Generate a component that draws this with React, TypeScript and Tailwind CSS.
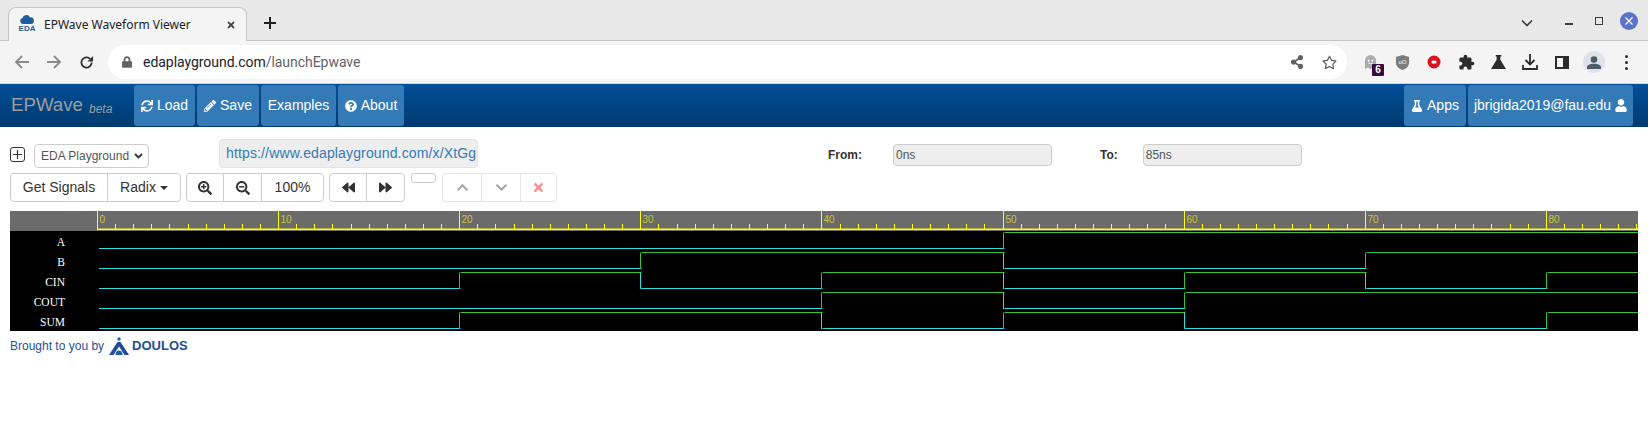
import React from "react";
import { FaSync, FaPencilAlt, FaQuestionCircle, FaFlask, FaUser, FaSearchPlus, FaSearchMinus, FaBackward, FaForward, FaChevronUp, FaChevronDown, FaTimes, FaRegStar, FaLock, FaShareAlt } from "react-icons/fa";

const X0 = 97;
const PX = 18.11;
const W = 1628;
const ORIGIN = 10;

type Sig = { name: string; edges: number[] };
const signals: Sig[] = [
  { name: "A", edges: [50] },
  { name: "B", edges: [30, 50, 70] },
  { name: "CIN", edges: [20, 30, 40, 50, 60, 70, 80] },
  { name: "COUT", edges: [40, 50, 60] },
  { name: "SUM", edges: [20, 40, 50, 60, 80] },
];
const xOf = (t: number) => Math.round(X0 + t * PX) + 0.5 - ORIGIN;

function Wave() {
  const ticks: number[] = [];
  for (let t = 0; t <= 85; t++) ticks.push(t);
  return (
    <svg width={W} height={120} className="block" style={{ fontFamily: '"Liberation Sans", sans-serif' }}>
      <rect x={0} y={0} width={W} height={20} fill="#6b6b6b" />
      <rect x={0} y={20} width={W} height={100} fill="#000" />
      <rect x={87} y={17.5} width={W - 87} height={1.5} fill="#ffff00" />
      {ticks.map((t) => {
        const major = t % 10 === 0;
        return <line key={t} x1={xOf(t)} x2={xOf(t)} y1={major ? 0 : 13} y2={18} stroke="#ffff00" strokeWidth={1} />;
      })}
      {ticks.filter((t) => t % 10 === 0).map((t) => (
        <text key={t} x={xOf(t) + 2} y={12} fontSize={10} fill="#c8c832">{t}</text>
      ))}
      {signals.map((s, i) => {
        const low = 37.5 + i * 20;
        const high = 21.5 + i * 20;
        const pts = [0, ...s.edges, 85.2];
        const segs: React.ReactNode[] = [];
        let state = false;
        for (let k = 0; k < pts.length - 1; k++) {
          const a = k === 0 ? 88 : xOf(pts[k]);
          const b = k === pts.length - 2 ? W : xOf(pts[k + 1]);
          const y = state ? high : low;
          const color = state ? "#36c336" : "#30e0e0";
          segs.push(<line key={`h${k}`} x1={a + 1} x2={b + (k === pts.length - 2 ? 0 : 1)} y1={y} y2={y} stroke={color} />);
          if (k > 0) {
            segs.push(<line key={`v${k}`} x1={a} x2={a} y1={high} y2={low + 0.5} stroke={color} />);
          }
          state = !state;
        }
        return (
          <g key={s.name}>
            <text x={55} y={35 + i * 20} textAnchor="end" fontSize={11.5} fill="#fff" style={{ fontFamily: '"Liberation Serif", serif' }}>{s.name}</text>
            {segs}
          </g>
        );
      })}
    </svg>
  );
}

const navBtn = "h-[41px] rounded-[3px] bg-[#337ab7] text-white text-[14px] flex items-center justify-center gap-[4px]";

function Favicon() {
  return (
    <div className="w-4 h-[20px] flex flex-col items-center justify-start">
      <svg width="14" height="9" viewBox="0 0 14 9" className="block"><path d="M3 9a3 3 0 0 1-.5-5.900A4 4 0 0 1 10 2.400 3.300 3.300 0 0 1 11 9z" fill="#1f5c99" /></svg>
      <span className="text-[8px] leading-[9px] font-bold text-[#1f5c99]">EDA</span>
    </div>
  );
}

const cell = "w-8 h-8 flex items-center justify-center shrink-0";

function Toolbar() {
  return (
    <div className="h-[43px] bg-[#f4f4f4] border-b border-[#d5d5d5] flex items-center text-[#5f6368]">
      <div className="w-[108px] pl-[6px] flex items-center shrink-0">
        <div className={cell}>
          <svg width="15" height="14" viewBox="0 0 15 14" className="text-[#8a8a8a] -ml-[2px]"><path d="M15 7H2M8 1 2 7l6 6" fill="none" stroke="currentColor" strokeWidth="1.800" /></svg>
        </div>
        <div className={cell}>
          <svg width="15" height="14" viewBox="0 0 15 14" className="text-[#8a8a8a]"><path d="M0 7h13M7 1l6 6-6 6" fill="none" stroke="currentColor" strokeWidth="1.800" /></svg>
        </div>
        <div className={cell}>
          <svg width="15" height="15" viewBox="0 0 16 16" className="text-[#333]"><path d="M13.500 8a5.500 5.500 0 1 1-1.600-3.900" fill="none" stroke="currentColor" strokeWidth="2" /><path d="M15 1v6H9z" fill="currentColor" /></svg>
        </div>
      </div>
      <div className="w-[1239px] h-[34px] bg-white rounded-full flex items-center pl-[14px] pr-[10px] text-[14px]" style={{ fontFamily: '"Roboto", sans-serif' }}>
        <FaLock className="text-[#5f6368] w-[10px] h-[12px] mr-[11px]" />
        <span className="text-[#202124] tracking-[-0.04px]">edaplayground.com</span>
        <span className="text-[#5f6368] tracking-[-0.04px]">/launchEpwave</span>
        <div className="ml-auto flex items-center gap-[18px]">
          <FaShareAlt className="w-[14px] h-[14px] text-[#5f6368]" />
          <FaRegStar className="w-[15px] h-[15px] text-[#5f6368]" />
        </div>
      </div>
      <div className="flex items-center pl-[7px]">
        <div className={`${cell} relative`}>
          <svg width="13" height="15" viewBox="0 0 14 16" className="text-[#a9adb1]"><path d="M1 15V6a6 6 0 0 1 12 0v9l-3-1.500-3 1.500-3-1.500z" fill="currentColor" /><circle cx="5" cy="6" r="1" fill="#fff" /><circle cx="9" cy="6" r="1" fill="#fff" /><path d="M4.500 8.500q2.500 2 5 0" stroke="#fff" strokeWidth="0.900" fill="none" /></svg>
          <span className="absolute left-[18px] top-[18px] w-[12px] h-[12px] rounded-[1px] bg-[#3a0b3d] text-white text-[10px] font-bold leading-[12px] text-center" style={{ fontFamily: '"Liberation Sans", sans-serif' }}>6</span>
        </div>
        <div className={cell}>
          <svg width="15" height="15" viewBox="0 0 14 16"><path d="M7 0 14 2v6c0 4-3 6.500-7 8-4-1.500-7-4-7-8V2z" fill="#7b7b7b" /><text x="7" y="10" fontSize="6.500" textAnchor="middle" fill="#fff" style={{ fontFamily: '"Liberation Sans", sans-serif' }}>uO</text></svg>
        </div>
        <div className={cell}>
          <svg width="14" height="14" viewBox="0 0 14 14"><circle cx="7" cy="7" r="6.500" fill="#d9131f" /><rect x="4.700" y="5.700" width="4.600" height="2.800" fill="#fff" /></svg>
        </div>
        <div className={cell}>
          <svg width="17" height="17" viewBox="0 0 24 24"><path d="M20.500 11H19V7c0-1.100-.9-2-2-2h-4V3.500C13 2.120 11.880 1 10.500 1S8 2.120 8 3.500V5H4c-1.100 0-1.990.9-1.990 2v3.800H3.500c1.490 0 2.700 1.210 2.700 2.700s-1.210 2.700-2.700 2.700H2V20c0 1.100.9 2 2 2h3.800v-1.500c0-1.490 1.210-2.700 2.700-2.700 1.490 0 2.700 1.210 2.700 2.700V22H17c1.100 0 2-.9 2-2v-4h1.500c1.380 0 2.500-1.120 2.500-2.500S21.880 11 20.500 11z" fill="#2c2c2c" /></svg>
        </div>
        <div className={cell}>
          <svg width="15" height="14" viewBox="0 0 16 15"><path d="M5 0h6v1.500h-1V5l6 10H0L6 5V1.500H5z" fill="#2c2c2c" /></svg>
        </div>
        <div className={cell}>
          <svg width="16" height="16" viewBox="0 0 16 16"><path d="M8 0v10M3.500 6 8 10.500 12.500 6M1 11v4h14v-4" fill="none" stroke="#2c2c2c" strokeWidth="1.800" /></svg>
        </div>
        <div className={cell}>
          <svg width="14" height="13" viewBox="0 0 14 13"><rect x="1" y="1" width="12" height="11" fill="none" stroke="#2c2c2c" strokeWidth="2" /><rect x="8" y="1" width="5" height="11" fill="#2c2c2c" /></svg>
        </div>
        <div className={cell}>
          <div className="w-[22px] h-[22px] rounded-full bg-[#dfe2e7] flex items-center justify-center">
            <svg width="14" height="13" viewBox="0 0 14 13"><circle cx="7" cy="3.500" r="3.300" fill="#4e5a6b" /><path d="M0 13v-1.500C0 9 3 7.800 7 7.800s7 1.200 7 3.700V13z" fill="#4e5a6b" /></svg>
          </div>
        </div>
        <div className={cell}>
          <div className="flex flex-col gap-[3px]">
            <span className="w-[3px] h-[3px] rounded-full bg-[#2c2c2c]" />
            <span className="w-[3px] h-[3px] rounded-full bg-[#2c2c2c]" />
            <span className="w-[3px] h-[3px] rounded-full bg-[#2c2c2c]" />
          </div>
        </div>
      </div>
    </div>
  );
}

const grpBtn = "h-full flex items-center justify-center border-r border-[#cccccc] last:border-r-0 text-[14px] text-[#333]";
const grp = "h-[29px] flex border border-[#cccccc] rounded-[4px] bg-white";

export default function App() {
  return (
    <div className="w-[1648px] h-[427px] bg-white overflow-hidden" style={{ fontFamily: '"Liberation Sans", sans-serif' }}>
      {/* tab strip */}
      <div className="h-[41px] bg-[#e8e8e8] border-b border-[#c4c4c4] flex items-end pl-[8px]">
        <div className="w-[239px] h-[34px] -mb-[1px] bg-[#f4f4f4] rounded-t-[8px] border border-b-0 border-[#c4c4c4] flex items-center pl-[10px] pr-[10px]">
          <Favicon />
          <span className="ml-[9px] text-[12px] text-[#202124]" style={{ fontFamily: '"Noto Sans", sans-serif' }}>EPWave Waveform Viewer</span>
          <FaTimes className="ml-auto w-[10px] h-[10px] text-[#3c4043]" />
        </div>
        <div className="h-[34px] flex items-center ml-[16px]">
          <svg width="14" height="14" viewBox="0 0 14 14"><path d="M7 1v12M1 7h12" stroke="#1f1f1f" strokeWidth="2" /></svg>
        </div>
        <div className="flex-1 h-[40px] pt-[2px] flex items-center justify-end pr-[10px]">
          <svg width="12" height="8" viewBox="0 0 12 8" className="mt-[3px]"><path d="M1 1.500 6 6.500 11 1.500" fill="none" stroke="#3c3c3c" strokeWidth="1.600" /></svg>
          <div className="ml-[32px] mt-[5px] w-[8px] h-[2px] bg-[#3c3c3c]" />
          <div className="ml-[22px] w-[8px] h-[8px] border border-[#3c3c3c]" />
          <div className="ml-[17px] w-[18px] h-[18px] rounded-full bg-[#5b74c9] flex items-center justify-center">
            <svg width="8" height="8" viewBox="0 0 8 8"><path d="M.5.5l7 7M7.500.5l-7 7" stroke="#fff" strokeWidth="1.200" /></svg>
          </div>
        </div>
      </div>
      <Toolbar />
      {/* navbar */}
      <div className="h-[43px] bg-gradient-to-b from-[#004f98] to-[#003a70] flex items-start pt-[1px] pl-[11px]">
        <div className="w-[123px] h-[41px] flex items-center text-[#9d9d9d]">
          <span className="text-[18.7px]">EPWave</span>
          <span className="text-[12px] italic ml-[6px] mt-[7px]">beta</span>
        </div>
        <div className="flex gap-[2px]">
          <div className={`${navBtn} w-[61px]`}><FaSync className="w-[12px] h-[12px]" />Load</div>
          <div className={`${navBtn} w-[62px]`}><FaPencilAlt className="w-[12px] h-[12px]" />Save</div>
          <div className={`${navBtn} w-[75px]`}>Examples</div>
          <div className={`${navBtn} w-[66px]`}><FaQuestionCircle className="w-[12px] h-[12px]" />About</div>
        </div>
        <div className="ml-auto flex gap-[2px] pr-[15px]">
          <div className={`${navBtn} w-[62px]`}><FaFlask className="w-[12px] h-[12px]" />Apps</div>
          <div className={`${navBtn} w-[165px]`}>jbrigida2019@fau.edu<FaUser className="w-[12px] h-[13px]" /></div>
        </div>
      </div>
      {/* controls */}
      <div className="pl-[10px] pt-[12px]">
        <div className="flex h-[34px] items-start">
          <div className="mt-[8px] w-[15px] h-[15px] border-[1.500px] border-[#333] rounded-[3px] flex items-center justify-center">
            <svg width="9" height="9" viewBox="0 0 9 9"><path d="M4.500 0v9M0 4.500h9" stroke="#333" strokeWidth="1.200" /></svg>
          </div>
          <div className="ml-[9px] mt-[5px] w-[115px] h-[24px] border border-[#cccccc] rounded-[4px] flex items-center pl-[6px] text-[12px] text-[#555]">
            EDA Playground
            <svg width="9" height="6" viewBox="0 0 9 6" className="ml-[5px]"><path d="M1 1l3.500 3.500L8 1" fill="none" stroke="#333" strokeWidth="1.800" /></svg>
          </div>
          <div className="ml-[70px] w-[259px] h-[29px] bg-[#eeeeee] border border-[#e3e3e3] rounded-[4px] flex items-center pl-[6px] text-[14px] tracking-[0.14px] text-[#337ab7]">https://www.edaplayground.com/x/XtGg</div>
          <span className="ml-[350px] mt-[7px] text-[12px] font-bold text-[#333]">From:</span>
          <div className="ml-[31px] mt-[5px] w-[159px] h-[22px] bg-[#eeeeee] border border-[#cccccc] rounded-[4px] flex items-center pl-[2px] text-[12px] text-[#555]">0ns</div>
          <span className="ml-[48px] mt-[7px] text-[12px] font-bold text-[#333]">To:</span>
          <div className="ml-[25px] mt-[5px] w-[159px] h-[22px] bg-[#eeeeee] border border-[#cccccc] rounded-[4px] flex items-center pl-[2px] text-[12px] text-[#555]">85ns</div>
        </div>
        <div className="flex items-start">
          <div className={grp}>
            <div className={`${grpBtn} w-[97px]`}>Get Signals</div>
            <div className={`${grpBtn} w-[72px] gap-[4px]`}>Radix<svg width="8" height="4" viewBox="0 0 8 4"><path d="M0 0h8L4 4z" fill="#333" /></svg></div>
          </div>
          <div className={`${grp} ml-[5px]`}>
            <div className={`${grpBtn} w-[37px]`}><FaSearchPlus className="w-[14px] h-[14px]" /></div>
            <div className={`${grpBtn} w-[38px]`}><FaSearchMinus className="w-[14px] h-[14px]" /></div>
            <div className={`${grpBtn} w-[61px]`}>100%</div>
          </div>
          <div className={`${grp} ml-[5px]`}>
            <div className={`${grpBtn} w-[37px]`}><FaBackward className="w-[13px] h-[13px]" /></div>
            <div className={`${grpBtn} w-[37px]`}><FaForward className="w-[13px] h-[13px]" /></div>
          </div>
          <div className="ml-[6px] w-[25px] h-[10px] border border-[#cccccc] rounded-[3px] bg-white" />
          <div className={`${grp} ml-[6px] border-[#e4e4e4]`}>
            <div className={`${grpBtn} w-[39px] border-[#e4e4e4]`}><FaChevronUp className="w-[13px] h-[13px] text-[#a6a6a6]" /></div>
            <div className={`${grpBtn} w-[39px] border-[#e4e4e4]`}><FaChevronDown className="w-[13px] h-[13px] text-[#a6a6a6]" /></div>
            <div className={`${grpBtn} w-[35px]`}><FaTimes className="w-[13px] h-[13px] text-[#ef8f8f]" /></div>
          </div>
        </div>
      </div>
      {/* wave */}
      <div className="pl-[10px] pt-[9px]">
        <Wave />
      </div>
      <div className="pl-[10px] pt-[5px] h-[24px] flex items-center text-[12px] text-[#1f4f9c]">
        <span>Brought to you by</span>
        <svg width="20" height="18" viewBox="0 0 20 18" className="ml-[5px]">
          <circle cx="10" cy="2" r="1.700" fill="#1f5ea8" />
          <path d="M8.500 5 0 18h4.500L10 9.500 15.500 18H20L11.500 5z" fill="#1f4e96" />
          <path d="M6.500 18a3.500 4.500 0 0 1 7 0z" fill="#1f5ea8" />
        </svg>
        <span className="ml-[3px] text-[13px] font-bold text-[#1f4e96]">DOULOS</span>
      </div>
    </div>
  );
}
